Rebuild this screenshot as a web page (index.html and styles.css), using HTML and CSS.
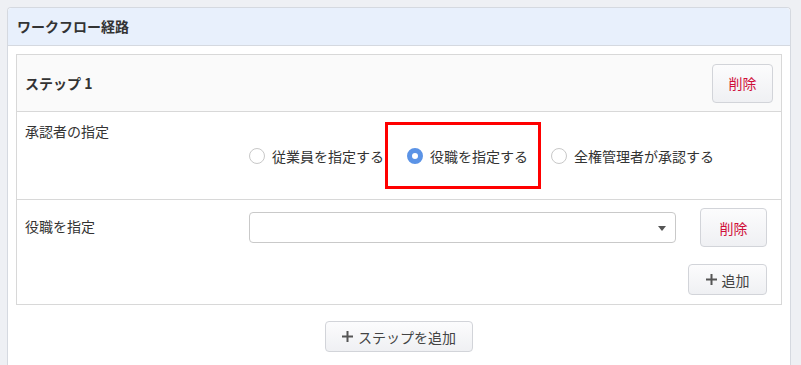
FILE: index.html
```html
<!DOCTYPE html>
<html lang="ja">
<head>
    <meta charset="UTF-8">
    <meta name="viewport" content="width=device-width, initial-scale=1.0">
    <title>ワークフロー経路</title>
    <link rel="stylesheet" href="styles.css">
</head>
<body>
    <div class="panel">
        <div class="panel-head">ワークフロー経路</div>
        <div class="panel-body">
            <div class="step">
                <div class="step-head">
                    <span class="step-title">ステップ 1</span>
                    <button class="btn btn-del btn-tall">削除</button>
                </div>
                <div class="step-row row-approver">
                    <div class="row-label">承認者の指定</div>
                    <div class="radios">
                        <label class="radio"><span class="dot"></span>従業員を指定する</label>
                        <label class="radio"><span class="dot checked"></span>役職を指定する<span class="mark"></span></label>
                        <label class="radio"><span class="dot"></span>全権管理者が承認する</label>
                    </div>
                </div>
                <div class="step-row row-position">
                    <div class="row-label">役職を指定</div>
                    <div class="controls">
                        <div class="select-line">
                            <div class="select"><span class="caret"></span></div>
                            <button class="btn btn-del btn-tall">削除</button>
                        </div>
                        <div class="add-line">
                            <button class="btn btn-add">
                                <svg class="plus" width="11" height="11" viewBox="0 0 11 11"><path d="M5.5 0v11M0 5.5h11" stroke="#555" stroke-width="2"/></svg>追加
                            </button>
                        </div>
                    </div>
                </div>
            </div>
            <div class="step-add">
                <button class="btn btn-add btn-step">
                    <svg class="plus" width="11" height="11" viewBox="0 0 11 11"><path d="M5.5 0v11M0 5.5h11" stroke="#555" stroke-width="2"/></svg>ステップを追加
                </button>
            </div>
        </div>
    </div>
</body>
</html>
```

FILE: styles.css
```css
body {
    margin: 0;
    padding: 7px 10px 0 7px;
    background-color: #eef0f4;
    font-family: "Noto Sans CJK JP", "Noto Sans", sans-serif;
    font-size: 14px;
    color: #333;
    height: 100vh;
    box-sizing: border-box;
    overflow: hidden;
}
.panel {
    background-color: #fff;
    border: 1px solid #d5d9e0;
    border-bottom: none;
    border-radius: 4px 4px 0 0;
    height: 100%;
    box-sizing: border-box;
}
.panel-head {
    height: 37px;
    line-height: 36px;
    padding: 0 9px;
    background-color: #e8f0fc;
    border-bottom: 1px solid #d5d9e0;
    border-radius: 4px 4px 0 0;
    font-weight: bold;
}
.panel-body {
    padding: 8px;
}
.step {
    border: 1px solid #d8d8d8;
}
.step-head {
    display: flex;
    justify-content: space-between;
    align-items: center;
    height: 56px;
    padding: 0 8px;
    background-color: #fafafa;
    border-bottom: 1px solid #d8d8d8;
}
.step-title {
    font-size: 14px;
    font-weight: bold;
}
.step-row {
    display: grid;
    grid-template-columns: 224px 1fr;
    padding: 0 14px 0 8px;
}
.row-approver {
    height: 87px;
    border-bottom: 1px solid #d8d8d8;
}
.row-label {
    padding-top: 9px;
    line-height: 20px;
}
.row-position .row-label {
    padding-top: 16px;
}
.radios {
    display: flex;
    align-items: center;
    padding-top: 34px;
    height: 20px;
}
.radio {
    position: relative;
    display: flex;
    align-items: center;
    gap: 7px;
    margin-right: 23px;
    line-height: 20px;
}
.dot {
    width: 14px;
    height: 14px;
    border: 1px solid #c8c8c8;
    border-radius: 50%;
    box-sizing: content-box;
    background: #fff;
}
.dot.checked {
    width: 6px;
    height: 6px;
    border: 5px solid #5b93e6;
}
.mark {
    position: absolute;
    left: -22px;
    top: -24px;
    width: 150px;
    height: 61px;
    border: 3px solid #ff0000;
}
.controls {
    padding-top: 8px;
}
.select-line {
    display: flex;
    align-items: center;
    gap: 24px;
}
.select {
    position: relative;
    flex: 1;
    height: 29px;
    border: 1px solid #c9c9c9;
    border-radius: 4px;
}
.caret {
    position: absolute;
    right: 9px;
    top: 13px;
    border-left: 4px solid transparent;
    border-right: 4px solid transparent;
    border-top: 5px solid #555;
}
.add-line {
    display: flex;
    justify-content: flex-end;
    padding: 17px 0 9px;
}
.btn {
    font-family: inherit;
    font-size: 14px;
    color: #444;
    background: linear-gradient(#fcfcfd, #eff0f3);
    border: 1px solid #d2d4d9;
    border-radius: 4px;
    padding: 0;
    cursor: pointer;
}
.btn-del {
    color: #d0103a;
}
.btn-tall {
    width: 61px;
    height: 39px;
}
.row-position .btn-tall {
    width: 67px;
}
.btn-add {
    width: 79px;
    height: 31px;
    display: flex;
    align-items: center;
    justify-content: center;
}
.plus {
    margin-right: 5px;
}
.step-add {
    display: flex;
    justify-content: center;
    padding-top: 16px;
}
.btn-step {
    width: 148px;
}
```
